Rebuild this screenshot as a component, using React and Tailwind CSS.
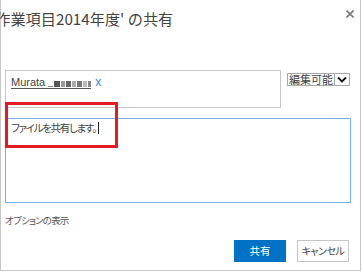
import React from 'react'

const jp = { fontFamily: '"Noto Sans CJK JP", "Noto Sans", sans-serif' }

export default function App() {
  return (
    <div className="relative w-[362px] h-[272px] bg-white overflow-hidden" style={jp}>
      <div className="w-[361px] h-[271px] border-l border-r border-b border-[#c6c6c6] flex flex-col">
        {/* Header */}
        <div className="flex items-start justify-between h-[70px]">
          <h1 className="ml-[-10px] mt-[7px] text-[15.2px] leading-[22px] font-normal text-[#444] whitespace-nowrap">
            '作業項目2014年度' の共有
          </h1>
          <svg className="mr-[6px] mt-[10px]" width="8" height="8" viewBox="0 0 8 8">
            <path d="M0.5 0.5 L7.5 7.5 M7.5 0.5 L0.5 7.5" stroke="#777" strokeWidth="1.6" />
          </svg>
        </div>

        {/* People picker + permission */}
        <div className="flex items-start pl-[4px] gap-[6px]">
          <div className="w-[276px] h-[38px] border border-[#c6c6c6] px-[5px] pt-[4px] flex items-start gap-[4px]">
            <div className="flex items-center h-[14px] border-b border-[#555]">
              <span className="text-[11px] leading-[14px] text-[#444]" style={{ fontFamily: '"Liberation Sans", Arial, sans-serif' }}>
                Murata
              </span>
              <span className="ml-[3px] flex items-end gap-[1px] h-[10px]">
                <span className="w-[5px] h-[1px] bg-[#888]" />
                <span className="w-[6px] h-[6px] bg-[#555]" />
                <span className="w-[4px] h-[6px] bg-[#999]" />
                <span className="w-[5px] h-[6px] bg-[#666]" />
                <span className="w-[4px] h-[6px] bg-[#aaa]" />
                <span className="w-[5px] h-[6px] bg-[#777]" />
                <span className="w-[4px] h-[6px] bg-[#bbb]" />
                <span className="w-[3px] h-[6px] bg-[#888]" />
              </span>
            </div>
            <span className="text-[12px] leading-[14px] text-[#2a8dd4]" style={{ fontFamily: '"Liberation Sans", Arial, sans-serif' }}>
              x
            </span>
          </div>
          <div className="mt-[3px] h-[13px] flex items-stretch border border-[#a9a9a9] bg-white">
            <span className="px-[1px] text-[11px] leading-[11px] text-[#444] whitespace-nowrap">編集可能</span>
            <span className="w-[15px] border-l border-[#a9a9a9] flex items-center justify-center">
              <svg width="10" height="7" viewBox="0 0 10 7">
                <path d="M1 1.5 L5 5.5 L9 1.5" fill="none" stroke="#111" strokeWidth="1.8" />
              </svg>
            </span>
          </div>
        </div>

        {/* Message box */}
        <div className="ml-[4px] mt-[10px] w-[346px] h-[85px] border border-[#74b4e6] px-[5px] pt-[1px]">
          <div className="flex items-center text-[10.5px] leading-[16px] tracking-[-1.3px] text-[#444] [font-feature-settings:'palt']">
            <span>ファイルを共有します。</span>
            <span className="ml-[2px] w-[1px] h-[12px] bg-[#222]" />
          </div>
        </div>

        <div className="ml-[4px] mt-[10px] text-[9.5px] leading-[14px] tracking-[-0.8px] text-[#555] [font-feature-settings:'palt']">
          オプションの表示
        </div>

        {/* Buttons */}
        <div className="mt-[13px] flex justify-end gap-[11px] pr-[11px]">
          <button className="w-[52px] h-[22px] bg-[#0072c6] text-white text-[10.5px] leading-none">共有</button>
          <button className="w-[52px] h-[22px] bg-[#fdfdfd] border border-[#c6c6c6] text-[#444] text-[10px] leading-none whitespace-nowrap tracking-[-0.5px] [font-feature-settings:'palt']">
            キャンセル
          </button>
        </div>
      </div>

      {/* Red highlight */}
      <div className="absolute left-[5px] top-[102px] w-[113px] h-[46px] border-[3px] border-[#e31b23]" />
    </div>
  )
}
